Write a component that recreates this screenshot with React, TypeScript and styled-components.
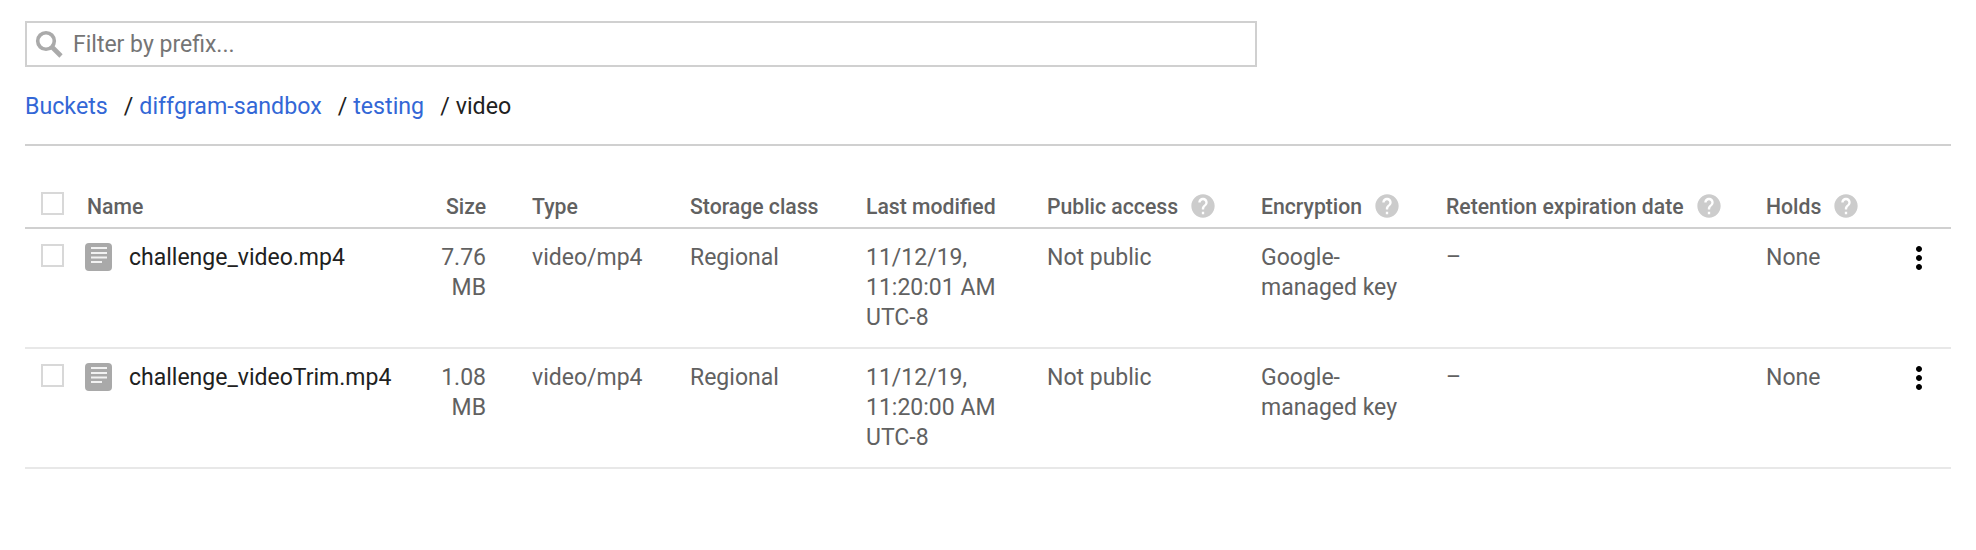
import React from "react";
import styled, { createGlobalStyle } from "styled-components";
import { MdHelp, MdMoreVert } from "react-icons/md";

const Global = createGlobalStyle`
  html, body { margin: 0; padding: 0; background: #fff; }
  body { font-family: Roboto, "Liberation Sans", sans-serif; font-size: 23px; line-height: 30px; color: #616161; }
  * { box-sizing: border-box; }
`;

const COLUMNS = "60px 347px 100px 158px 176px 181px 214px 185px 320px 134px 51px";

const Page = styled.div`
  width: 1976px;
  height: 550px;
  padding: 21px 25px 0;
  overflow: hidden;
`;

const FilterBox = styled.div`
  width: 1232px;
  height: 46px;
  border: 2px solid #d0d0d0;
  display: flex;
  align-items: center;
  padding-left: 8px;
  gap: 10px;
  color: #757575;
  svg { flex: none; }
`;

const FilterText = styled.span`
  padding-top: 1px;
`;

const Crumbs = styled.nav`
  display: flex;
  align-items: center;
  height: 30px;
  margin-top: 24px;
  font-size: 23.2px;
`;

const CrumbLink = styled.a`
  color: #3367d6;
  text-decoration: none;
`;

const Slash = styled.span`
  color: #212121;
  margin-left: 16px;
  margin-right: 6px;
`;

const Current = styled.span`
  color: #212121;
`;

const Rule = styled.hr`
  border: 0;
  height: 2px;
  background: #d0d0d0;
  margin: 23px 0 0;
`;

const Table = styled.div`
  width: 1926px;
  margin-top: 45px;
`;

const HeaderRow = styled.div`
  display: grid;
  grid-template-columns: ${COLUMNS};
  height: 38px;
  border-bottom: 2px solid #d0d0d0;
  font-size: 21.2px;
  font-weight: 500;
  color: #616161;
`;

const HeaderCell = styled.div<{ $right?: boolean; $pad?: number }>`
  display: flex;
  align-items: flex-start;
  height: 30px;
  padding-top: 1px;
  padding-right: ${(p) => p.$pad ?? 0}px;
  justify-content: ${(p) => (p.$right ? "flex-end" : "flex-start")};
  white-space: nowrap;
  svg { color: #cccccc; margin-left: 11px; margin-top: 0; flex: none; }
`;

const NameHead = styled(HeaderCell)`
  padding-left: 2px;
`;

const BodyRow = styled.div`
  display: grid;
  grid-template-columns: ${COLUMNS};
  height: 120px;
  padding-top: 14px;
  border-bottom: 2px solid #e8e8e8;
`;

const Cell = styled.div<{ $right?: boolean; $pad?: number }>`
  padding-right: ${(p) => p.$pad ?? 0}px;
  text-align: ${(p) => (p.$right ? "right" : "left")};
`;

const NameCell = styled.div`
  display: flex;
  align-items: flex-start;
  gap: 17px;
  color: #212121;
  white-space: nowrap;
`;

const CheckCell = styled.div`
  padding: 1px 0 0 16px;
`;

const Check = styled.span`
  display: block;
  width: 23px;
  height: 23px;
  border: 2px solid #d8d8d8;
  background: #fff;
`;

const FileBadge = styled.svg`
  flex: none;
`;

const Kebab = styled.div`
  color: #000;
  margin: -3px 0 0 1px;
  svg { display: block; }
`;

const FileIcon = () => (
  <FileBadge width="27" height="28" viewBox="0 0 27 28">
    <rect width="27" height="28" rx="4" fill="#a9a9a9" />
    <path d="M6 5h16M6 10h16M6 14.5h16M6 19h11" stroke="#f2f2f2" strokeWidth="2" />
  </FileBadge>
);

const SearchIcon = () => (
  <svg width="28" height="28" viewBox="0 0 28 28" fill="none" stroke="#aaaaaa">
    <circle cx="11" cy="11" r="8.3" strokeWidth="3.6" />
    <path d="M17 17l9 9" strokeWidth="4.6" />
  </svg>
);

const Help = () => <MdHelp size={28} />;

const rows = [
  { name: "challenge_video.mp4", size: "7.76 MB", time: "11/12/19, 11:20:01 AM UTC-8" },
  { name: "challenge_videoTrim.mp4", size: "1.08 MB", time: "11/12/19, 11:20:00 AM UTC-8" },
];

export default function App() {
  return (
    <Page>
      <Global />
      <FilterBox>
        <SearchIcon />
        <FilterText>Filter by prefix...</FilterText>
      </FilterBox>
      <Crumbs>
        <CrumbLink>Buckets</CrumbLink>
        <Slash>/</Slash>
        <CrumbLink>diffgram-sandbox</CrumbLink>
        <Slash>/</Slash>
        <CrumbLink>testing</CrumbLink>
        <Slash>/</Slash>
        <Current>video</Current>
      </Crumbs>
      <Rule />
      <Table>
        <HeaderRow>
          <CheckCell><Check /></CheckCell>
          <NameHead>Name</NameHead>
          <HeaderCell $right $pad={46}>Size</HeaderCell>
          <HeaderCell>Type</HeaderCell>
          <HeaderCell>Storage class</HeaderCell>
          <HeaderCell>Last modified</HeaderCell>
          <HeaderCell>Public access<Help /></HeaderCell>
          <HeaderCell>Encryption<Help /></HeaderCell>
          <HeaderCell>Retention expiration date<Help /></HeaderCell>
          <HeaderCell>Holds<Help /></HeaderCell>
          <HeaderCell />
        </HeaderRow>
        {rows.map((r) => (
          <BodyRow key={r.name}>
            <CheckCell><Check /></CheckCell>
            <NameCell><FileIcon />{r.name}</NameCell>
            <Cell $right $pad={46}>{r.size}</Cell>
            <Cell>video/mp4</Cell>
            <Cell>Regional</Cell>
            <Cell $pad={10}>{r.time}</Cell>
            <Cell>Not public</Cell>
            <Cell $pad={20}>Google-managed key</Cell>
            <Cell>–</Cell>
            <Cell>None</Cell>
            <Kebab><MdMoreVert size={36} /></Kebab>
          </BodyRow>
        ))}
      </Table>
    </Page>
  );
}
